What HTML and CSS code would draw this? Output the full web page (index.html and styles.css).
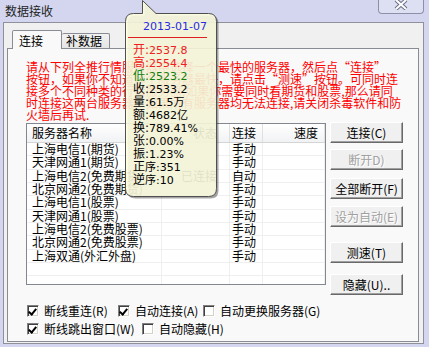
FILE: index.html
```html
<!DOCTYPE html>
<html lang="zh-CN">
<head>
    <meta charset="UTF-8">
    <title>数据接收</title>
    <link rel="stylesheet" href="styles.css">
</head>
<body>
    <div class="window">
        <div class="titlebar">
            <span class="title">数据接收</span>
            <div class="close-btn">
                <svg width="14" height="10" viewBox="0 0 14 10">
                    <path d="M2,0 L12,9 M12,0 L2,9" stroke="#6b6f86" stroke-width="4" fill="none"/>
                    <path d="M2,0 L12,9 M12,0 L2,9" stroke="#ffffff" stroke-width="2" fill="none"/>
                </svg>
            </div>
        </div>

        <div class="client">
            <div class="tabs">
                <div class="tab active">连接</div>
                <div class="tab">补数据</div>
            </div>
            <div class="panel">
                <div class="notice">
                    <div>请从下列全推行情服务器中选择一个最快的服务器，然后点“连接”</div>
                    <div>按钮，如果你不知道哪个服务器最快，请点击“测速”按钮。可同时连</div>
                    <div>接多个不同种类的行情服务器,如果你需要同时看期货和股票,那么请同</div>
                    <div>时连接这两台服务器。如果所有服务器均无法连接,请关闭杀毒软件和防</div>
                    <div>火墙后再试.</div>
                </div>

                <div class="main-row">
                    <div class="listview">
                        <div class="lv-head">
                            <div class="col-name">服务器名称</div>
                            <div class="col-state">状态</div>
                            <div class="col-mode">连接</div>
                            <div class="col-speed">速度</div>
                        </div>
                        <div class="lv-row"><div class="col-name">上海电信1(期货)</div><div class="col-state"></div><div class="col-mode">手动</div><div class="col-speed"></div></div>
                        <div class="lv-row"><div class="col-name">天津网通1(期货)</div><div class="col-state"></div><div class="col-mode">手动</div><div class="col-speed"></div></div>
                        <div class="lv-row"><div class="col-name">上海电信2(免费期货)</div><div class="col-state">已连接</div><div class="col-mode">自动</div><div class="col-speed"></div></div>
                        <div class="lv-row"><div class="col-name">北京网通2(免费期货)</div><div class="col-state"></div><div class="col-mode">手动</div><div class="col-speed"></div></div>
                        <div class="lv-row"><div class="col-name">上海电信1(股票)</div><div class="col-state"></div><div class="col-mode">手动</div><div class="col-speed"></div></div>
                        <div class="lv-row"><div class="col-name">天津网通1(股票)</div><div class="col-state"></div><div class="col-mode">手动</div><div class="col-speed"></div></div>
                        <div class="lv-row"><div class="col-name">上海电信2(免费股票)</div><div class="col-state"></div><div class="col-mode">手动</div><div class="col-speed"></div></div>
                        <div class="lv-row"><div class="col-name">北京网通2(免费股票)</div><div class="col-state"></div><div class="col-mode">手动</div><div class="col-speed"></div></div>
                        <div class="lv-row"><div class="col-name">上海双通(外汇外盘)</div><div class="col-state"></div><div class="col-mode">手动</div><div class="col-speed"></div></div>
                        <div class="lv-row"><div class="col-name"></div><div class="col-state"></div><div class="col-mode"></div><div class="col-speed"></div></div>
                        <div class="lv-row"><div class="col-name"></div><div class="col-state"></div><div class="col-mode"></div><div class="col-speed"></div></div>
                    </div>

                    <div class="btn-col">
                        <button class="btn">连接(C)</button>
                        <button class="btn gap-6" disabled>断开D)</button>
                        <button class="btn gap-8">全部断开(F)</button>
                        <button class="btn gap-7" disabled>设为自动(E)</button>
                        <button class="btn gap-15">测速(T)</button>
                        <button class="btn gap-11">隐藏(U)..</button>
                    </div>
                </div>

                <div class="options">
                    <div class="opt-row">
                        <label class="opt w-91"><span class="cb checked"></span>断线重连(R)</label>
                        <label class="opt w-85"><span class="cb checked"></span>自动连接(A)</label>
                        <label class="opt"><span class="cb"></span>自动更换服务器(G)</label>
                    </div>
                    <div class="opt-row">
                        <label class="opt w-115"><span class="cb checked"></span>断线跳出窗口(W)</label>
                        <label class="opt"><span class="cb"></span>自动隐藏(H)</label>
                    </div>
                </div>
            </div>
        </div>

        <div class="tooltip">
            <svg class="tip-shape" width="98" height="202" viewBox="0 0 98 202">
                <path transform="translate(2,2)" d="M8.5,13.5 H17.5 V0.5 L31,13.5 H83.5 Q91.5,13.5 91.5,21.5 V188.5 Q91.5,196.5 83.5,196.5 H8.5 Q0.5,196.5 0.5,188.5 V21.5 Q0.5,13.5 8.5,13.5 Z" fill="rgba(0,0,0,0.35)"/>
                <path d="M8.5,13.5 H17.5 V0.5 L31,13.5 H83.5 Q91.5,13.5 91.5,21.5 V188.5 Q91.5,196.5 83.5,196.5 H8.5 Q0.5,196.5 0.5,188.5 V21.5 Q0.5,13.5 8.5,13.5 Z" fill="#ffffe1" fill-opacity="0.88" stroke="#505050" stroke-width="1"/>
            </svg>
            <div class="tip-body">
                <div class="tip-date">2013-01-07</div>
                <div class="tip-rule"></div>
                <div class="tip-line red">开:2537.8</div>
                <div class="tip-line red">高:2554.4</div>
                <div class="tip-line green">低:2523.2</div>
                <div class="tip-line">收:2533.2</div>
                <div class="tip-line">量:61.5万</div>
                <div class="tip-line">额:4682亿</div>
                <div class="tip-line">换:789.41%</div>
                <div class="tip-line">张:0.00%</div>
                <div class="tip-line">振:1.23%</div>
                <div class="tip-line">正序:351</div>
                <div class="tip-line">逆序:10</div>
            </div>
        </div>
    </div>
</body>
</html>
```

FILE: styles.css
```css
* {
    box-sizing: border-box;
}

body {
    margin: 0;
    background-color: #d3d6ee;
    font-family: "Noto Sans CJK SC", sans-serif;
    font-size: 12px;
    color: #000;
}

.window {
    position: relative;
    width: 429px;
    height: 347px;
    overflow: hidden;
}

/* title bar */
.titlebar {
    display: flex;
    align-items: flex-start;
    height: 22px;
}

.title {
    padding: 4px 0 0 5px;
    line-height: 14px;
    font-size: 12px;
    color: #1e1e1e;
}

.close-btn {
    display: flex;
    justify-content: center;
    margin-left: auto;
    margin-right: 5px;
    width: 46px;
    height: 14px;
    border: 1px solid #8d90a8;
    border-top: none;
    border-radius: 0 0 4px 4px;
    background-color: #dde0f3;
}

/* dialog body */
.client {
    margin-left: 3px;
    width: 421px;
    height: 322px;
    border: 1px solid #8e909c;
    background-color: #f0f0f0;
    padding: 7px 4px 0 3px;
}

.tabs {
    display: flex;
    align-items: flex-end;
    height: 18px;
    padding-left: 5px;
}

.tab {
    height: 15px;
    padding: 0 6px 0 4px;
    line-height: 14px;
    border: 1px solid #898c95;
    border-bottom: none;
    border-radius: 2px 2px 0 0;
    background: linear-gradient(#f2f2f2, #e5e5e5);
}

.tab.active {
    position: relative;
    z-index: 1;
    width: 50px;
    height: 19px;
    margin-bottom: -1px;
    padding: 3px 0 0 6px;
    background: #f9f9f9;
}

.tab + .tab {
    width: 48px;
    border-left: none;
}

.panel {
    width: 412px;
    height: 294px;
    border: 1px solid #898c95;
    background-color: #f9f9f9;
    padding: 12px 0 0 18px;
}

.notice {
    color: #ff0000;
    line-height: 12px;
    white-space: nowrap;
}

.main-row {
    display: flex;
    align-items: flex-start;
    margin-top: 2px;
}

/* list view */
.listview {
    width: 300px;
    height: 162px;
    border: 1px solid #828790;
    background-color: #fff;
    overflow: hidden;
}

.lv-head,
.lv-row {
    display: grid;
    grid-template-columns: 135px 68px 33px 62px;
}

.lv-head {
    height: 19px;
    line-height: 18px;
    background: linear-gradient(#ffffff, #f1f2f4);
    border-bottom: 1px solid #d5d5d5;
}

.lv-head > div {
    border-right: 1px solid #e0e0e0;
}

.lv-row {
    height: 13.33px;
    line-height: 12px;
}

.lv-row > div {
    border-right: 1px solid #efefef;
    border-bottom: 1px solid #efefef;
}

.col-name {
    padding-left: 5px;
}

.col-state {
    text-align: right;
    padding-right: 12px;
}

.col-mode {
    padding-left: 2px;
}

.col-speed {
    text-align: right;
    padding-right: 6px;
}

/* buttons */
.btn-col {
    display: flex;
    flex-direction: column;
    margin-left: 4px;
    margin-top: -1px;
}

.btn {
    width: 73px;
    height: 21px;
    padding: 0;
    font-family: "Noto Sans CJK SC", sans-serif;
    font-size: 12px;
    line-height: 18px;
    color: #000;
    background-color: #f0f0f0;
    border: 1px solid;
    border-color: #ffffff #696969 #696969 #ffffff;
    box-shadow: inset -1px -1px #a0a0a0;
}

.btn:disabled {
    color: #a0a0a0;
    text-shadow: 1px 1px #ffffff;
}

.gap-6 { margin-top: 6px; }
.gap-7 { margin-top: 7px; }
.gap-8 { margin-top: 8px; }
.gap-11 { margin-top: 11px; }
.gap-15 { margin-top: 15px; }

/* check boxes */
.options {
    margin-top: 10px;
    padding-left: 1px;
}

.opt-row {
    display: flex;
    height: 18px;
}

.opt {
    display: flex;
    align-items: center;
    height: 12px;
    line-height: 12px;
    white-space: nowrap;
}

.w-85 { width: 85px; }
.w-91 { width: 91px; }
.w-115 { width: 115px; }

.cb {
    position: relative;
    width: 12px;
    height: 12px;
    margin-right: 5px;
    background-color: #fff;
    border: 1px solid;
    border-color: #808080 #ffffff #ffffff #808080;
    box-shadow: inset 1px 1px #404040, inset -1px -1px #d4d0c8;
}

.cb.checked::after {
    content: "";
    position: absolute;
    left: 2px;
    top: 1px;
    width: 3px;
    height: 6px;
    border: solid #000;
    border-width: 0 2px 2px 0;
    transform: rotate(40deg);
}

/* quote tooltip */
.tooltip {
    position: absolute;
    left: 125px;
    top: 0;
    width: 98px;
    height: 202px;
}

.tip-shape {
    position: absolute;
    left: 0;
    top: 0;
}

.tip-body {
    position: relative;
    padding: 20px 0 0 8px;
    font-family: "DejaVu Sans", "Noto Sans CJK SC", sans-serif;
    font-size: 11px;
}

.tip-date {
    width: 84px;
    line-height: 13px;
    text-align: center;
    color: #2a2ae6;
}

.tip-rule {
    width: 79px;
    height: 1px;
    margin: 4px 0 6px -5px;
    background-color: #e02020;
}

.tip-line {
    line-height: 13px;
    white-space: nowrap;
}

.tip-line::first-letter {
    font-size: 12px;
}

.red { color: #f02020; }
.green { color: #108010; }
```
